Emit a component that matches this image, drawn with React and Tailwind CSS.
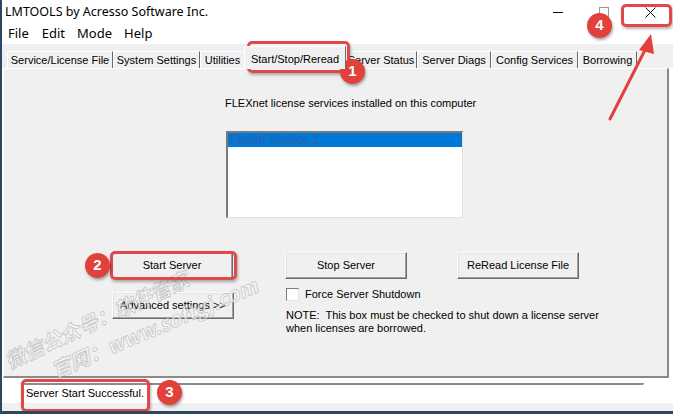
import React from "react";

const ui = "font-['Liberation_Sans',Arial,sans-serif]";
const seg = "font-['Noto_Sans','Open_Sans',sans-serif]";

const tabs = [
  { label: "Service/License File", w: "w-[106px]" },
  { label: "System Settings", w: "w-[87px]" },
  { label: "Utilities", w: "w-[45px]" },
  { label: "Start/Stop/Reread", w: "w-[102px]", active: true },
  { label: "Server Status", w: "w-[72px]" },
  { label: "Server Diags", w: "w-[74px]" },
  { label: "Config Services", w: "w-[87px]" },
  { label: "Borrowing", w: "w-[59px]" },
];

function Btn({ children, className = "" }) {
  return (
    <div
      className={
        "flex items-center justify-center h-[27px] w-[122px] bg-[#f0f0f0] border border-t-[#fcfcfc] border-l-[#fcfcfc] border-r-[#696969] border-b-[#696969] shadow-[inset_-1px_-1px_0_#a0a0a0,inset_1px_1px_0_#e3e3e3] text-[11px] text-black " +
        className
      }
    >
      {children}
    </div>
  );
}

function Badge({ n, className = "" }) {
  return (
    <div
      className={
        "absolute flex items-center justify-center w-[25px] h-[25px] rounded-full bg-[#e2403a] text-white text-[15px] font-bold shadow-[1px_2px_3px_rgba(0,0,0,0.35)] font-['Liberation_Sans',sans-serif] " +
        className
      }
    >
      {n}
    </div>
  );
}

function Hilite({ className = "" }) {
  return (
    <div
      className={
        "absolute rounded-[5px] border-[3px] border-[#df4a48] shadow-[1px_2px_3px_rgba(0,0,0,0.3)] pointer-events-none " +
        className
      }
    />
  );
}

export default function App() {
  return (
    <div className="relative w-[673px] h-[414px] overflow-hidden bg-white border-l-2 border-b-[3px] border-[#2c4862] flex flex-col">
      {/* title bar */}
      <div className="flex items-center h-[24px] bg-white">
        <span className={`${seg} pl-[3px] text-[12.5px] text-black`}>
          LMTOOLS by Acresso Software Inc.
        </span>
        <div className="ml-auto flex h-full">
          <div className="w-[46px] flex items-center justify-center">
            <div className="w-[10px] h-px bg-black" />
          </div>
          <div className="w-[46px] flex items-center justify-center">
            <div className="w-[10px] h-[10px] border border-[#999]" />
          </div>
          <div className="w-[46px] flex items-center justify-center">
            <svg width="11" height="11" viewBox="0 0 11 11">
              <path d="M0.5 0.5L10.5 10.5M10.5 0.5L0.5 10.5" stroke="#111" strokeWidth="1" />
            </svg>
          </div>
        </div>
      </div>

      {/* menu */}
      <div className={`${seg} flex items-center h-[20px] bg-white text-[13px] text-black`}>
        <span className="ml-[6px]">File</span>
        <span className="ml-[13px]">Edit</span>
        <span className="ml-[12px]">Mode</span>
        <span className="ml-[12px]">Help</span>
      </div>

      {/* tab strip */}
      <div className={`${ui} flex items-end h-[24px] bg-[#f0f0f0] pl-[5px] text-[11px] text-black`}>
        {tabs.map((t) =>
          t.active ? (
            <div
              key={t.label}
              className={`${t.w} h-[23px] -mx-[1px] relative z-10 -mb-px flex items-start justify-center pt-[4px] bg-[#f0f0f0] border-t border-l border-white border-r border-r-[#696969]`}
            >
              {t.label}
            </div>
          ) : (
            <div
              key={t.label}
              className={`${t.w} h-[17px] flex items-center justify-center whitespace-nowrap overflow-hidden bg-[#f0f0f0] border-t border-l border-white border-r border-r-[#696969]`}
            >
              {t.label}
            </div>
          )
        )}
      </div>

      {/* panel */}
      <div className={`${ui} h-[310px] ml-[1px] mr-[4px] bg-[#f0f0f0] border-t border-l border-white border-r-2 border-r-[#8a8a8a] border-b-2 border-b-[#8a8a8a] text-[11px] leading-[13px] text-black flex flex-col`}>
        <div className="mt-[28px] ml-[221px]">
          FLEXnet license services installed on this computer
        </div>
        <div className="mt-[21px] ml-[222px] w-[237px] h-[87px] bg-white border-t-2 border-l-2 border-[#7a7a7a] border-r border-b border-r-[#e3e3e3] border-b-[#e3e3e3]">
          <div className="h-[14px] bg-[#0078d7] pl-[2px] text-[12px] leading-[14px] text-[#2f5f9a] blur-[0.6px]">
            Flexlm Service 1
          </div>
        </div>

        <div className="mt-[34px] ml-[107px] flex">
          <Btn>Start Server</Btn>
          <Btn className="ml-[52px]">Stop Server</Btn>
          <Btn className="ml-[50px]">ReRead License File</Btn>
        </div>

        <div className="ml-[108px] flex items-start">
          <Btn className="mt-[13px] w-[121px]">Advanced settings &gt;&gt;</Btn>
          <div className="ml-[52px] mt-[9px] flex flex-col">
            <div className="flex items-center">
              <div className="w-[13px] h-[13px] bg-white border border-t-[#7a7a7a] border-l-[#7a7a7a] border-r-[#e3e3e3] border-b-[#e3e3e3]" />
              <span className="ml-[6px]">Force Server Shutdown</span>
            </div>
            <div className="mt-[8px] whitespace-pre">
              {"NOTE:  This box must be checked to shut down a license server\nwhen licenses are borrowed."}
            </div>
          </div>
        </div>
      </div>

      {/* status bar */}
      <div className="mt-[5px] ml-[21px] w-[621px] h-[20px] flex items-center border-t-2 border-l border-[#8a8a8a] border-r border-b border-r-white border-b-white">
        <span className={`${ui} ml-[2px] text-[11px] text-black`}>Server Start Successful.</span>
      </div>
      <div className="flex-1 bg-[#f0f0f0]" />

      {/* watermark */}
      <div className="absolute left-0 top-0 pointer-events-none select-none">
        <div className="absolute left-[4px] top-[348px] -rotate-[25deg] origin-left whitespace-nowrap text-[20px] leading-[28px] font-bold italic text-white/60 font-['Noto_Sans_CJK_SC',sans-serif] [-webkit-text-stroke:1px_rgba(140,140,140,0.4)]">
          微信公众号：软件管家
        </div>
        <div className="absolute left-[50px] top-[357px] -rotate-[23deg] origin-left whitespace-nowrap text-[20px] leading-[28px] font-bold italic text-white/60 font-['Noto_Sans_CJK_SC',sans-serif] [-webkit-text-stroke:1px_rgba(140,140,140,0.4)]">
          官网：www.softgj.com
        </div>
      </div>

      {/* annotations */}
      <Hilite className="left-[245px] top-[41px] w-[103px] h-[32px]" />
      <Hilite className="left-[108px] top-[251px] w-[127px] h-[29px]" />
      <Hilite className="left-[19px] top-[379px] w-[129px] h-[33px]" />
      <Hilite className="left-[619px] top-[4px] w-[51px] h-[23px]" />
      <svg className="absolute left-0 top-0 pointer-events-none" width="673" height="414">
        <line x1="608" y1="119" x2="644" y2="48" stroke="#e2403a" strokeWidth="3" strokeLinecap="round" />
        <polygon points="649,34 637,50 652,54" fill="#e2403a" />
      </svg>
      <Badge n="1" className="left-[338px] top-[59px]" />
      <Badge n="2" className="left-[83px] top-[253px]" />
      <Badge n="3" className="left-[155px] top-[380px]" />
      <Badge n="4" className="left-[585px] top-[13px]" />
    </div>
  );
}
